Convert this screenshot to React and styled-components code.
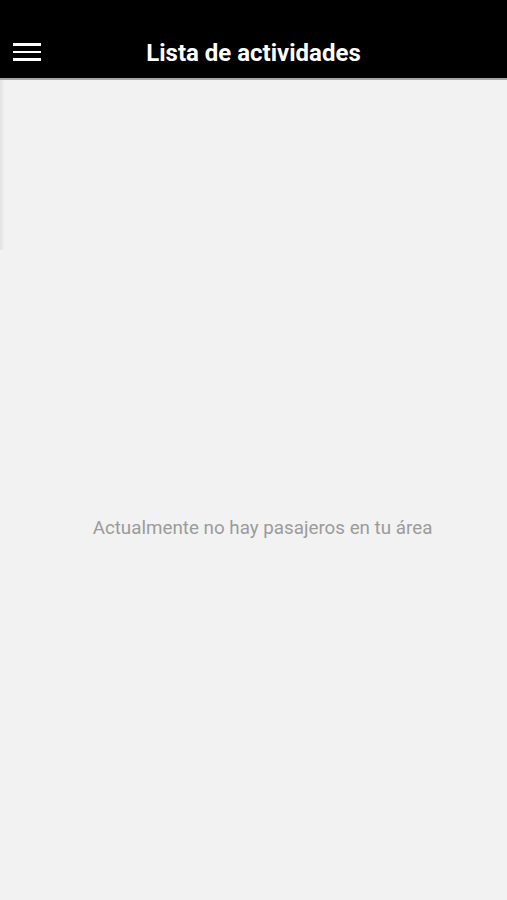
import React from "react";
import styled, { createGlobalStyle } from "styled-components";

const Global = createGlobalStyle`
  html, body { margin: 0; padding: 0; background: #f2f2f2; }
  body { font-family: Roboto, "Liberation Sans", sans-serif; }
`;

const Screen = styled.div`
  width: 507px;
  height: 900px;
  display: flex;
  flex-direction: column;
  background: #f2f2f2;
  overflow: hidden;
  position: relative;
`;

const Header = styled.header`
  height: 80px;
  background: #000;
  border-bottom: 2px solid #a8a8a8;
  display: flex;
  align-items: flex-end;
  padding: 0 0 17px 13px;
  box-sizing: border-box;
  position: relative;
  flex-shrink: 0;
`;

const MenuButton = styled.button`
  width: 28px;
  height: 18px;
  padding: 0;
  border: 0;
  background: transparent;
  display: flex;
  flex-direction: column;
  justify-content: space-between;
`;

const Bar = styled.span`
  display: block;
  height: 2.6px;
  width: 28px;
  background: #fff;
`;

const Title = styled.h1`
  position: absolute;
  left: 0;
  right: 0;
  bottom: 11px;
  margin: 0;
  text-align: center;
  color: #fff;
  font-size: 24px;
  font-weight: 700;
  line-height: 28px;
  pointer-events: none;
`;

const Body = styled.main`
  flex: 1;
  display: flex;
  align-items: center;
  justify-content: center;
  padding-top: 76px;
`;

const Empty = styled.p`
  margin: 0;
  color: #9b9b9b;
  font-size: 18.8px;
  padding-left: 18px;
`;

const DrawerEdge = styled.div`
  position: absolute;
  left: 0;
  top: 80px;
  width: 4px;
  height: 170px;
  background: linear-gradient(to right, #e2e2e2, #f0f0f0);
  border-bottom-right-radius: 3px;
`;

export default function App() {
  return (
    <Screen>
      <Global />
      <Header>
        <MenuButton aria-label="menu">
          <Bar />
          <Bar />
          <Bar />
        </MenuButton>
        <Title>Lista de actividades</Title>
      </Header>
      <DrawerEdge />
      <Body>
        <Empty>Actualmente no hay pasajeros en tu área</Empty>
      </Body>
    </Screen>
  );
}
